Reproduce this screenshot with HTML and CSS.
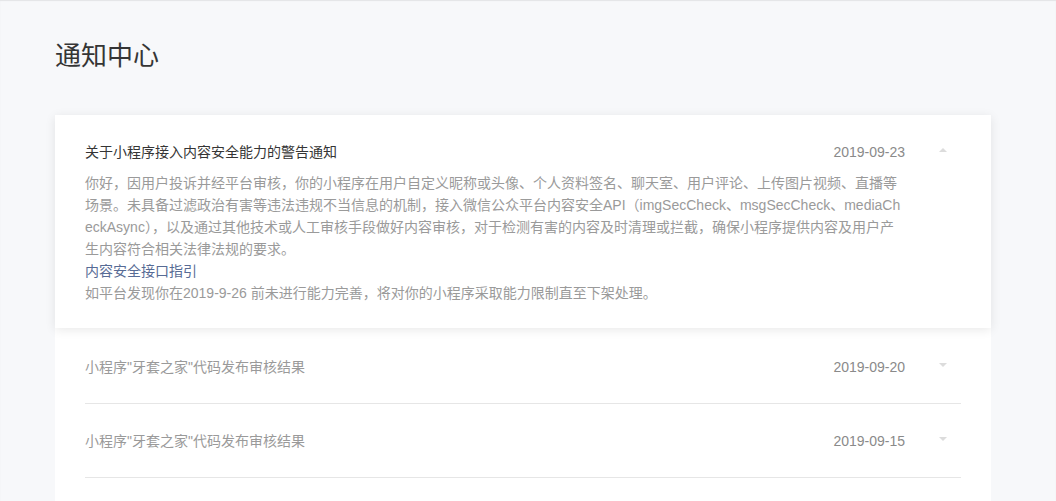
FILE: index.html
```html
<!DOCTYPE html>
<html lang="zh-CN">
<head>
<meta charset="utf-8">
<title>通知中心</title>
<link rel="stylesheet" href="styles.css">
</head>
<body>
<div class="page">
  <h1 class="page-title">通知中心</h1>
  <div class="list">
    <div class="item item-open">
      <div class="item-head">
        <div class="item-title">关于小程序接入内容安全能力的警告通知</div>
        <div class="item-date">2019-09-23</div>
        <span class="arrow arrow-up"></span>
      </div>
      <div class="item-body">
        <p>你好，因用户投诉并经平台审核，你的小程序在用户自定义昵称或头像、个人资料签名、聊天室、用户评论、上传图片视频、直播等场景。未具备过滤政治有害等违法违规不当信息的机制，接入微信公众平台内容安全API（imgSecCheck、msgSecCheck、mediaCheckAsync），以及通过其他技术或人工审核手段做好内容审核，对于检测有害的内容及时清理或拦截，确保小程序提供内容及用户产生内容符合相关法律法规的要求。</p>
        <a class="link" href="#">内容安全接口指引</a>
        <p>如平台发现你在2019-9-26 前未进行能力完善，将对你的小程序采取能力限制直至下架处理。</p>
      </div>
    </div>
    <div class="item">
      <div class="item-head item-row">
        <div class="item-title">小程序"牙套之家"代码发布审核结果</div>
        <div class="item-date">2019-09-20</div>
        <span class="arrow arrow-down"></span>
      </div>
    </div>
    <div class="item">
      <div class="item-head item-row">
        <div class="item-title">小程序"牙套之家"代码发布审核结果</div>
        <div class="item-date">2019-09-15</div>
        <span class="arrow arrow-down"></span>
      </div>
    </div>
  </div>
</div>
</body>
</html>
```

FILE: styles.css
```css
html, body {
  margin: 0;
  padding: 0;
}
body {
  background: #f7f8fa;
  font-family: "Liberation Sans", "Noto Sans CJK SC", sans-serif;
  font-size: 14px;
  color: #353535;
  box-shadow: inset 0 1px 1px #e3e4e6;
  min-height: 501px;
  overflow: hidden;
}
.page {
  padding: 40px 65px 0 55px;
}
.page-title {
  margin: 0;
  font-size: 26px;
  font-weight: normal;
  line-height: 32px;
  color: #353535;
}
.list {
  margin-top: 43px;
  padding-bottom: 40px;
  background: #fff;
}
.item {
  padding: 0 30px;
}
.item-open {
  position: relative;
  z-index: 1;
  margin-bottom: 2px;
  padding: 26px 30px 24px;
  box-shadow: 0 2px 10px rgba(0, 0, 0, 0.09);
}
.item-head {
  display: flex;
  align-items: center;
  line-height: 22px;
}
.item-row {
  padding: 26px 0 25px;
  border-bottom: 1px solid #e6e6e6;
}
.item-title {
  flex: 1;
  color: #353535;
}
.item-row .item-title {
  color: #9a9a9a;
}
.item-date {
  color: #8a8a8a;
}
.arrow {
  width: 0;
  height: 0;
  margin: 0 14px 0 34px;
  border-left: 4px solid transparent;
  border-right: 4px solid transparent;
}
.arrow-up {
  border-bottom: 4px solid #dcdcdc;
  margin-top: -4px;
}
.arrow-down {
  border-top: 4px solid #dcdcdc;
  margin-top: -4px;
}
.item-body {
  margin-top: 9px;
  width: 820px;
  line-height: 22px;
  color: #9a9a9a;
  word-break: break-all;
}
.item-body p {
  margin: 0;
}
.link {
  display: block;
  color: #576b95;
  text-decoration: none;
}
```
